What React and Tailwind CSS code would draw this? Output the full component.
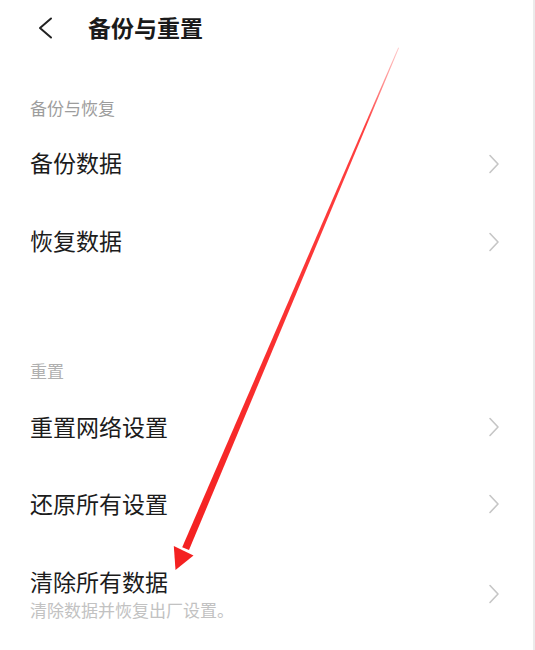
import React from "react";

const font = { fontFamily: '"Noto Sans CJK SC", "Noto Sans", sans-serif' };

function Chevron() {
  return (
    <svg width="12" height="20" viewBox="0 0 12 20" className="shrink-0">
      <path d="M2 1.5 L10 10 L2 18.5" fill="none" stroke="#c6c6c6" strokeWidth="1.6" strokeLinecap="round" strokeLinejoin="round" />
    </svg>
  );
}

function Item({ title, h }) {
  return (
    <div className={`flex items-center justify-between pl-[30px] pr-[33px] ${h}`}>
      <span className="text-[23px] leading-[30px] text-[#1c1c1c] mb-[6px]">{title}</span>
      <div className="mb-[3px]">
        <Chevron />
      </div>
    </div>
  );
}

export default function App() {
  return (
    <div className="relative w-[535px] h-[650px] bg-white border-r-2 border-[#ebebeb] overflow-hidden" style={font}>
      <div className="flex items-center h-[56px]">
        <div className="w-[88px] flex pl-[37px]">
          <svg width="17" height="22" viewBox="0 0 17 22">
            <path d="M14 1.5 L3 11 L14 20.5" fill="none" stroke="#222" strokeWidth="2" strokeLinecap="round" strokeLinejoin="round" />
          </svg>
        </div>
        <span className="text-[23px] leading-[30px] font-bold text-[#1a1a1a] mb-[3px]">备份与重置</span>
      </div>

      <div className="h-[34px]" />
      <div className="h-[36px] flex items-center pl-[30px]">
        <span className="text-[17px] leading-[22px] text-[#9d9d9d] mb-[1px]">备份与恢复</span>
      </div>
      <Item title="备份数据" h="h-[78px]" />
      <Item title="恢复数据" h="h-[78px]" />

      <div className="h-[72px]" />
      <div className="h-[36px] flex items-center pl-[30px]">
        <span className="text-[17px] leading-[22px] text-[#b0b0b0] mb-[2px]">重置</span>
      </div>
      <Item title="重置网络设置" h="h-[77px]" />
      <Item title="还原所有设置" h="h-[77px]" />

      <div className="flex items-start justify-between pl-[30px] pr-[33px] pt-[22px]">
        <div className="flex flex-col gap-[3px]">
          <span className="text-[23px] leading-[30px] text-[#1c1c1c]">清除所有数据</span>
          <span className="text-[17px] leading-[22px] text-[#c2c2c2]">清除数据并恢复出厂设置。</span>
        </div>
        <div className="mt-[18px]">
          <Chevron />
        </div>
      </div>

      <svg className="absolute inset-0 pointer-events-none" width="535" height="650" viewBox="0 0 535 650">
        <defs>
          <linearGradient id="g" x1="398" y1="48" x2="185" y2="550" gradientUnits="userSpaceOnUse">
            <stop offset="0" stopColor="#ff4a4a" stopOpacity="0.3" />
            <stop offset="0.15" stopColor="#ff2b2b" stopOpacity="0.9" />
            <stop offset="1" stopColor="#f42121" />
          </linearGradient>
        </defs>
        <polygon points="398.2,47.5 399,48 189,550 182.2,547.2" fill="url(#g)" />
        <polygon points="175.5,570 173.8,546 193.5,555.5" fill="#f42121" />
      </svg>
    </div>
  );
}
